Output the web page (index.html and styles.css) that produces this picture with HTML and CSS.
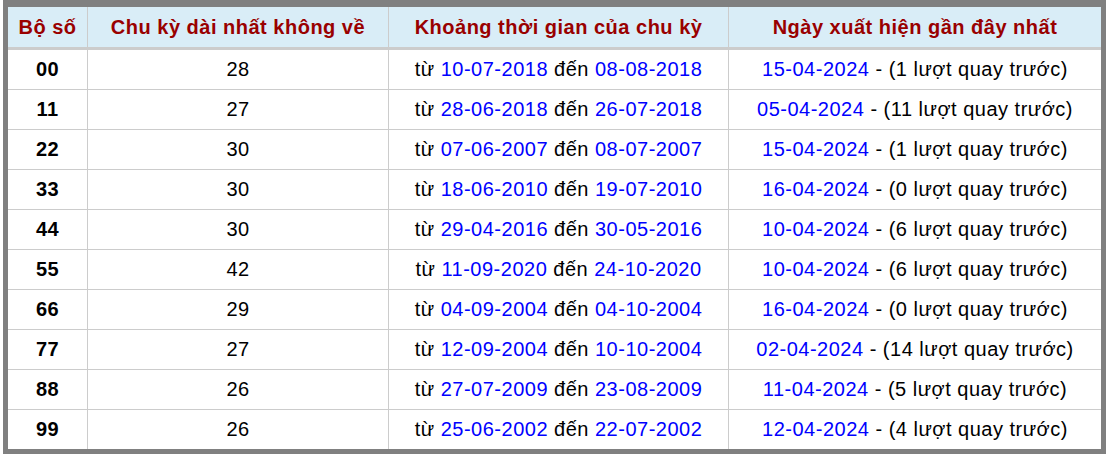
FILE: index.html
```html
<!DOCTYPE html>
<html lang="vi">
<head>
<meta charset="utf-8">
<title>Chu kỳ dài nhất không về</title>
<link rel="stylesheet" href="styles.css">
</head>
<body>
<div class="frame">
<table class="stats">
  <colgroup>
    <col class="c1"><col class="c2"><col class="c3"><col class="c4">
  </colgroup>
  <thead>
    <tr>
      <th>Bộ số</th>
      <th>Chu kỳ dài nhất không về</th>
      <th>Khoảng thời gian của chu kỳ</th>
      <th>Ngày xuất hiện gần đây nhất</th>
    </tr>
  </thead>
  <tbody>
    <tr><td class="num">00</td><td>28</td><td>từ <span class="d">10-07-2018</span> đến <span class="d">08-08-2018</span></td><td><span class="d">15-04-2024</span> - (1 lượt quay trước)</td></tr>
    <tr><td class="num">11</td><td>27</td><td>từ <span class="d">28-06-2018</span> đến <span class="d">26-07-2018</span></td><td><span class="d">05-04-2024</span> - (11 lượt quay trước)</td></tr>
    <tr><td class="num">22</td><td>30</td><td>từ <span class="d">07-06-2007</span> đến <span class="d">08-07-2007</span></td><td><span class="d">15-04-2024</span> - (1 lượt quay trước)</td></tr>
    <tr><td class="num">33</td><td>30</td><td>từ <span class="d">18-06-2010</span> đến <span class="d">19-07-2010</span></td><td><span class="d">16-04-2024</span> - (0 lượt quay trước)</td></tr>
    <tr><td class="num">44</td><td>30</td><td>từ <span class="d">29-04-2016</span> đến <span class="d">30-05-2016</span></td><td><span class="d">10-04-2024</span> - (6 lượt quay trước)</td></tr>
    <tr><td class="num">55</td><td>42</td><td>từ <span class="d">11-09-2020</span> đến <span class="d">24-10-2020</span></td><td><span class="d">10-04-2024</span> - (6 lượt quay trước)</td></tr>
    <tr><td class="num">66</td><td>29</td><td>từ <span class="d">04-09-2004</span> đến <span class="d">04-10-2004</span></td><td><span class="d">16-04-2024</span> - (0 lượt quay trước)</td></tr>
    <tr><td class="num">77</td><td>27</td><td>từ <span class="d">12-09-2004</span> đến <span class="d">10-10-2004</span></td><td><span class="d">02-04-2024</span> - (14 lượt quay trước)</td></tr>
    <tr><td class="num">88</td><td>26</td><td>từ <span class="d">27-07-2009</span> đến <span class="d">23-08-2009</span></td><td><span class="d">11-04-2024</span> - (5 lượt quay trước)</td></tr>
    <tr><td class="num">99</td><td>26</td><td>từ <span class="d">25-06-2002</span> đến <span class="d">22-07-2002</span></td><td><span class="d">12-04-2024</span> - (4 lượt quay trước)</td></tr>
  </tbody>
</table>
</div>
</body>
</html>
```

FILE: styles.css
```css
html, body {
  margin: 0;
  padding: 0;
  background: #ffffff;
}

body {
  font-family: "Liberation Sans", Arial, sans-serif;
}

.frame {
  margin-left: 3px;
  width: 1093px;
  border: 5px solid #808080;
  border-top-width: 7px;
}

.stats {
  width: 1093px;
  table-layout: fixed;
  border-collapse: separate;
  border-spacing: 0;
  font-size: 20px;
  letter-spacing: 0.5px;
  color: #000;
}

.c1 { width: 80px; }
.c2 { width: 301px; }
.c3 { width: 340px; }
.c4 { width: 372px; }

.stats th {
  background: #d9edf7;
  color: #990000;
  font-weight: bold;
  height: 40px;
  padding: 0;
  text-align: center;
  vertical-align: middle;
  border-right: 1px solid #cccccc;
  border-bottom: 3px solid #cccccc;
  white-space: nowrap;
}

.stats td {
  height: 39px;
  padding: 0;
  text-align: center;
  vertical-align: middle;
  border-right: 1px solid #cccccc;
  border-bottom: 1px solid #cccccc;
  white-space: nowrap;
}

.stats th:last-child,
.stats td:last-child {
  border-right: 0;
}

.stats tbody tr:last-child td {
  border-bottom: 0;
}

.stats .num {
  font-weight: bold;
}

.d {
  color: #0000ff;
}
```
